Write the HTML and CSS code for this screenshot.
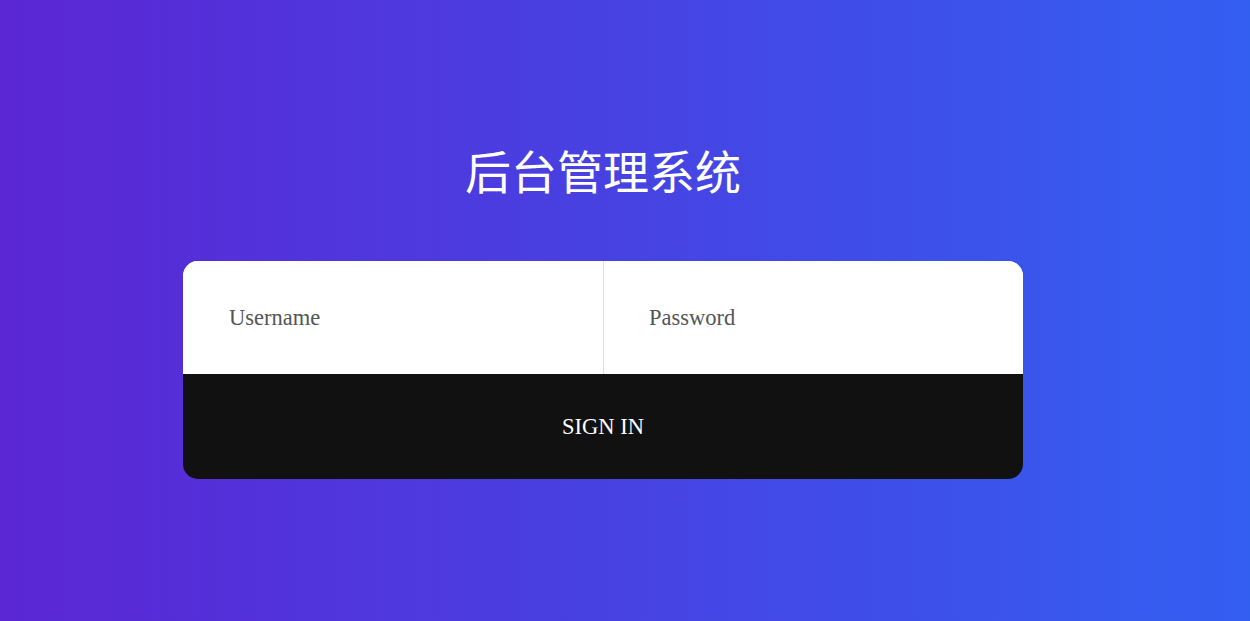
FILE: index.html
```html
<!DOCTYPE html>
<html lang="zh">
<head>
<meta charset="utf-8">
<title>后台管理系统</title>
<link rel="stylesheet" href="styles.css">
</head>
<body>
<main class="page">
  <h1 class="title">后台管理系统</h1>
  <form class="card">
    <div class="fields">
      <input class="field" type="text" placeholder="Username">
      <input class="field field-right" type="password" placeholder="Password">
    </div>
    <button class="submit" type="button">SIGN IN</button>
  </form>
</main>
</body>
</html>
```

FILE: styles.css
```css
html, body {
  margin: 0;
  padding: 0;
  height: 100%;
}
body {
  background: linear-gradient(to right, #5b26d4, #335ff1);
  font-family: "Liberation Serif", "Times New Roman", serif;
  overflow: hidden;
}
.page {
  width: 1206px;
  display: flex;
  flex-direction: column;
  align-items: center;
  padding-top: 136px;
}
.title {
  margin: 0;
  color: #fff;
  font-family: "Noto Sans CJK SC", "Noto Sans", sans-serif;
  font-weight: 400;
  font-size: 46px;
  line-height: 66px;
  letter-spacing: 0;
}
.card {
  margin-top: 59px;
  width: 840px;
  border-radius: 15px;
  overflow: hidden;
  display: flex;
  flex-direction: column;
}
.fields {
  display: flex;
  background: #fff;
}
.field {
  flex: 1;
  min-width: 0;
  height: 113px;
  box-sizing: border-box;
  border: none;
  outline: none;
  padding: 0 46px;
  font-family: "Liberation Serif", "Times New Roman", serif;
  font-size: 22.5px;
  color: #555;
  background: #fff;
}
.field::placeholder {
  color: #555;
}
.field-right {
  border-left: 1px solid #ddd;
  padding-left: 45px;
}
.submit {
  height: 105px;
  border: none;
  background: #111;
  color: #fff;
  font-family: "Liberation Serif", "Times New Roman", serif;
  font-size: 22.5px;
  cursor: pointer;
}
```
